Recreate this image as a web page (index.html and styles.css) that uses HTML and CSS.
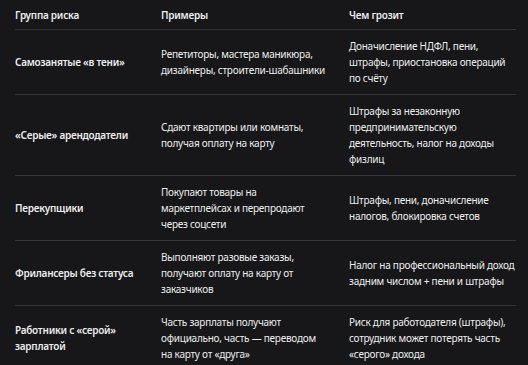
FILE: index.html
```html
<!DOCTYPE html>
<html lang="ru">
<head>
<meta charset="utf-8">
<link rel="stylesheet" href="styles.css">
</head>
<body>
<table class="risk-table">
  <colgroup>
    <col class="c1"><col class="c2"><col class="c3">
  </colgroup>
  <thead>
    <tr><th>Группа риска</th><th>Примеры</th><th>Чем грозит</th></tr>
  </thead>
  <tbody>
    <tr>
      <td class="group">Самозанятые «в тени»</td>
      <td>Репетиторы, мастера маникюра, дизайнеры, строители-шабашники</td>
      <td>Доначисление НДФЛ, пени, штрафы, приостановка операций по счёту</td>
    </tr>
    <tr>
      <td class="group">«Серые» арендодатели</td>
      <td>Сдают квартиры или комнаты, получая оплату на карту</td>
      <td>Штрафы за незаконную предпринимательскую деятельность, налог на доходы физлиц</td>
    </tr>
    <tr>
      <td class="group">Перекупщики</td>
      <td>Покупают товары на маркетплейсах и перепродают через соцсети</td>
      <td>Штрафы, пени, доначисление налогов, блокировка счетов</td>
    </tr>
    <tr>
      <td class="group">Фрилансеры без статуса</td>
      <td>Выполняют разовые заказы, получают оплату на карту от заказчиков</td>
      <td>Налог на профессиональный доход задним числом + пени и штрафы</td>
    </tr>
    <tr>
      <td class="group">Работники с «серой» зарплатой</td>
      <td>Часть зарплаты получают официально, часть — переводом на карту от «друга»</td>
      <td>Риск для работодателя (штрафы), сотрудник может потерять часть «серого» дохода</td>
    </tr>
  </tbody>
</table>
</body>
</html>
```

FILE: styles.css
```css
html, body {
  margin: 0;
  padding: 0;
  background: #17171a;
}
body {
  padding: 0 12px 0 15px;
  font-family: "Noto Sans", "Open Sans", sans-serif;
  font-size: 10px;
  letter-spacing: -0.25px;
  line-height: 16px;
  color: #ededed;
}
.risk-table {
  width: 501px;
  border-collapse: collapse;
  table-layout: fixed;
}
.c1 { width: 146px; }
.c2 { width: 188px; }
.c3 { width: 167px; }
.risk-table th {
  text-align: left;
  font-weight: 600;
  padding: 7px 10px 6px 0;
  border-bottom: 1px solid #34343a;
}
.risk-table td {
  vertical-align: middle;
  padding: 8px 10px 8px 0;
  border-bottom: 1px solid #34343a;
}
.risk-table td:nth-child(2) {
  padding-right: 22px;
}
.risk-table td:last-child, .risk-table th:last-child {
  padding-right: 0;
}
.risk-table td.group {
  font-weight: 600;
}
```
